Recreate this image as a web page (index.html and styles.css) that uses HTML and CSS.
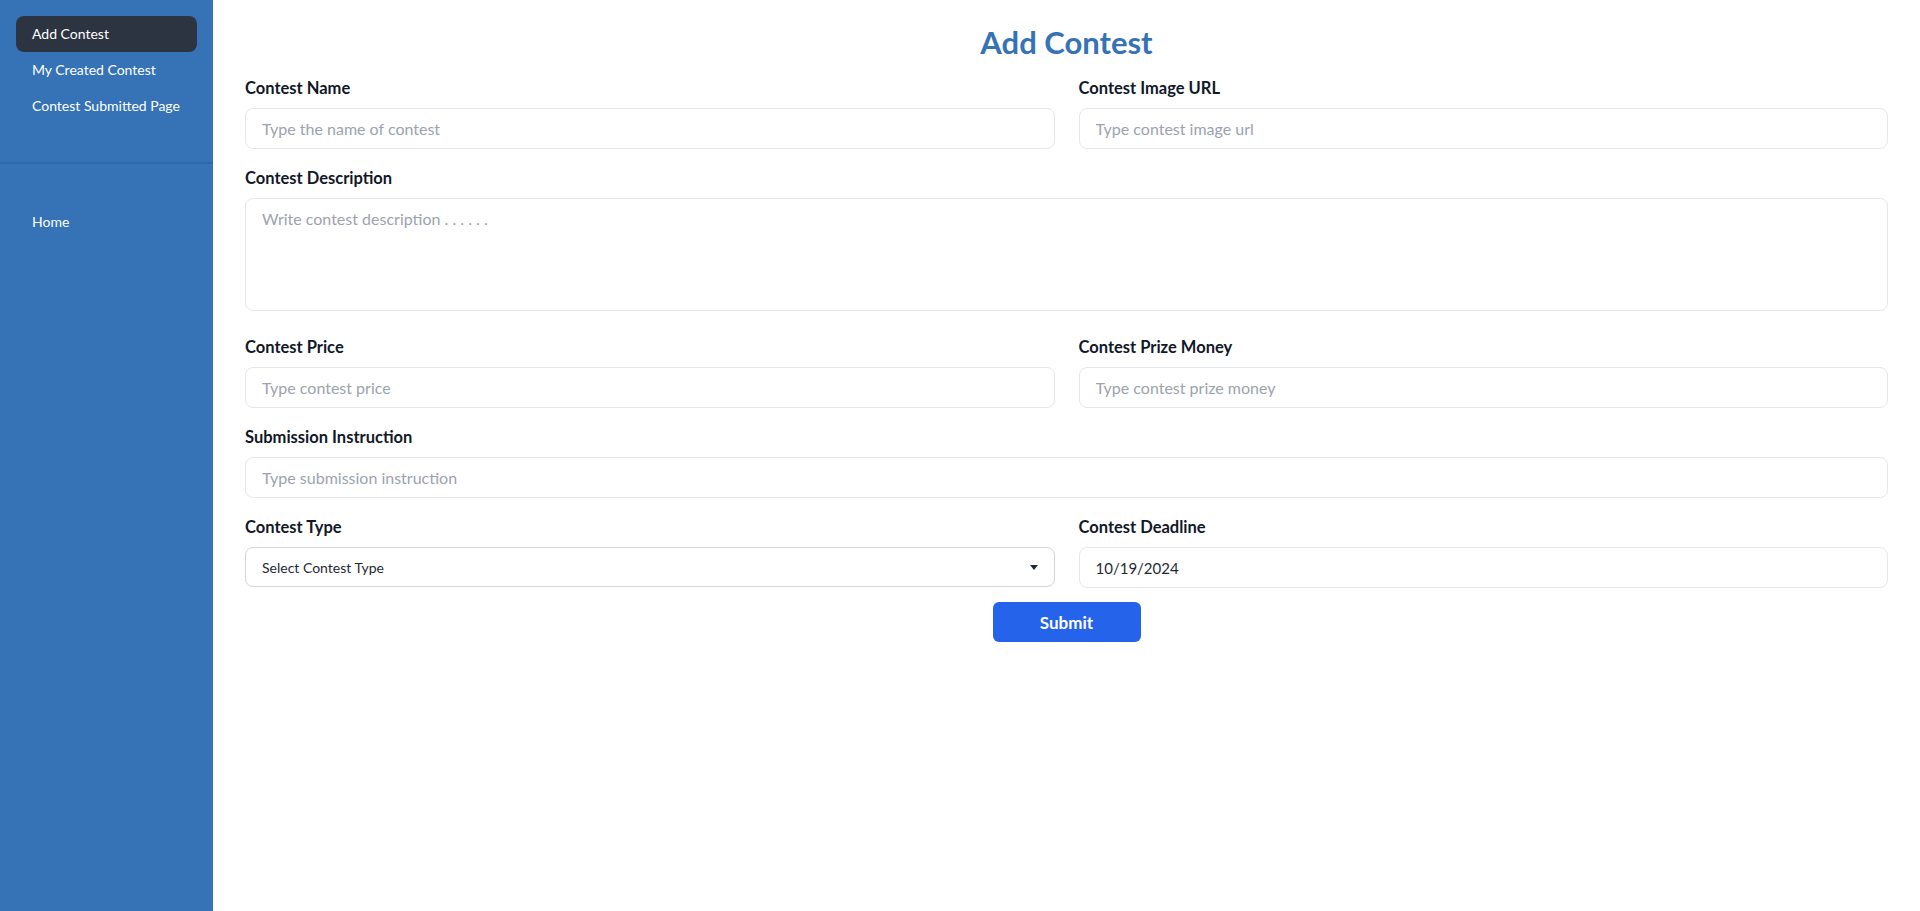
FILE: index.html
```html
<!DOCTYPE html>
<html lang="en">
<head>
<meta charset="utf-8">
<title>Add Contest</title>
<link rel="stylesheet" href="styles.css">
</head>
<body>
<div class="layout">
  <aside class="sidebar">
    <ul class="menu">
      <li><a class="menu-item active">Add Contest</a></li>
      <li><a class="menu-item">My Created Contest</a></li>
      <li><a class="menu-item">Contest Submitted Page</a></li>
    </ul>
    <div class="divider"></div>
    <ul class="menu menu-bottom">
      <li><a class="menu-item">Home</a></li>
    </ul>
  </aside>
  <main class="main">
    <h1 class="title">Add Contest</h1>
    <form class="form">
      <div class="row two">
        <div class="field">
          <label class="label">Contest Name</label>
          <input class="input" type="text" placeholder="Type the name of contest">
        </div>
        <div class="field">
          <label class="label">Contest Image URL</label>
          <input class="input" type="text" placeholder="Type contest image url">
        </div>
      </div>
      <div class="row">
        <div class="field">
          <label class="label">Contest Description</label>
          <textarea class="textarea" placeholder="Write contest description . . . . . ."></textarea>
        </div>
      </div>
      <div class="row two">
        <div class="field">
          <label class="label">Contest Price</label>
          <input class="input" type="text" placeholder="Type contest price">
        </div>
        <div class="field">
          <label class="label">Contest Prize Money</label>
          <input class="input" type="text" placeholder="Type contest prize money">
        </div>
      </div>
      <div class="row">
        <div class="field">
          <label class="label">Submission Instruction</label>
          <input class="input" type="text" placeholder="Type submission instruction">
        </div>
      </div>
      <div class="row two">
        <div class="field">
          <label class="label">Contest Type</label>
          <div class="select">
            <span>Select Contest Type</span>
            <svg class="caret" width="8" height="5" viewBox="0 0 8 5"><path d="M0 0h8L4 5z" fill="#1f2937"/></svg>
          </div>
        </div>
        <div class="field">
          <label class="label">Contest Deadline</label>
          <div class="input date">10/19/2024</div>
        </div>
      </div>
      <div class="actions">
        <button type="button" class="btn">Submit</button>
      </div>
    </form>
  </main>
</div>
</body>
</html>
```

FILE: styles.css
```css
* { box-sizing: border-box; }
html, body { margin: 0; padding: 0; height: 100%; }
body {
  font-family: "Lato", "Open Sans", sans-serif;
  color: #1f2937;
  background: #ffffff;
}
.layout {
  display: flex;
  min-height: 911px;
}
.sidebar {
  width: 213px;
  flex: 0 0 213px;
  background: #3572b6;
  color: #ffffff;
}
.menu {
  list-style: none;
  margin: 0;
  padding: 16px;
}
.menu-item {
  display: block;
  height: 36px;
  line-height: 36px;
  padding: 0 16px;
  font-size: 14px;
  border-radius: 8px;
  color: #ffffff;
}
.menu-item.active {
  background: #2c3441;
}
.divider {
  height: 2px;
  background: #2f68a8;
  margin-top: 22px;
}
.menu-bottom {
  padding-top: 40px;
}
.main {
  flex: 1;
  padding: 24px 32px 0 32px;
}
.title {
  margin: 0;
  text-align: center;
  font-size: 31px;
  line-height: 36px;
  font-weight: 700;
  color: #3572b6;
}
.form {
  display: flex;
  flex-direction: column;
  margin-top: 18px;
}
.row {
  display: grid;
  grid-template-columns: 1fr;
  gap: 24px;
  margin-bottom: 19px;
}
.row.two {
  grid-template-columns: 1fr 1fr;
}
.field {
  display: flex;
  flex-direction: column;
}
.label {
  font-size: 16.5px;
  line-height: 20px;
  font-weight: 700;
  color: #111827;
  margin-bottom: 10px;
}
.input, .textarea, .select {
  font-family: inherit;
  font-size: 16px;
  color: #1f2937;
  border: 1px solid #e5e7eb;
  border-radius: 8px;
  background: #ffffff;
  padding: 0 16px;
  outline: none;
}
.input {
  height: 41px;
}
.input::placeholder, .textarea::placeholder {
  color: #9ca3af;
}
.textarea {
  height: 113px;
  padding-top: 10px;
  resize: none;
  line-height: 20px;
  margin-bottom: 7px;
}
.date {
  display: flex;
  align-items: center;
  font-size: 15px;
  color: #1f2937;
}
.select {
  height: 40px;
  display: flex;
  align-items: center;
  justify-content: space-between;
  border-color: #d1d5db;
  font-size: 14px;
  padding: 0 16px 0 16px;
  color: #1f2937;
}
.caret { display: block; }
.actions {
  display: flex;
  justify-content: center;
  margin-top: -5px;
}
.btn {
  width: 148px;
  height: 40px;
  border: none;
  border-radius: 6px;
  background: #2563eb;
  color: #ffffff;
  font-family: inherit;
  font-size: 17px;
  font-weight: 700;
}
```
